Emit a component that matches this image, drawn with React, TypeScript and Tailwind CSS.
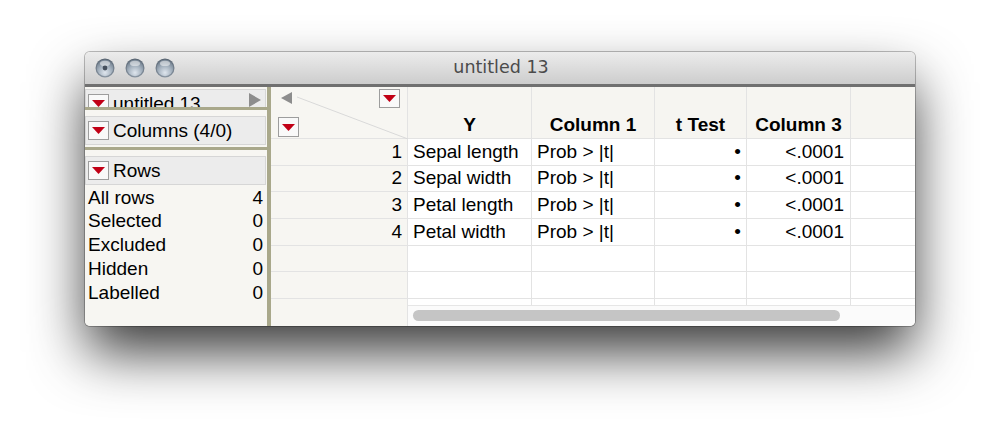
import React from "react";

const sans = "font-['Liberation_Sans',Arial,sans-serif]";

const DropButton = ({ className = "" }: { className?: string }) => (
  <div
    className={`w-[21px] h-[19px] border border-[#9d9d9d] bg-[#f9f9f9] flex items-center justify-center shrink-0 ${className}`}
  >
    <svg width="13" height="7" viewBox="0 0 13 7">
      <polygon points="0,0 13,0 6.5,7" fill="#c10016" />
    </svg>
  </div>
);

const Light = ({ dot }: { dot?: boolean }) => (
  <svg width="20" height="20" viewBox="0 0 20 20">
    <defs>
      <linearGradient id="ring" x1="0" y1="0" x2="0" y2="1">
        <stop offset="0" stopColor="#5a6673" />
        <stop offset="1" stopColor="#8894a1" />
      </linearGradient>
      <radialGradient id="fill" cx="0.5" cy="0.78" r="0.7">
        <stop offset="0" stopColor="#dfe6ee" />
        <stop offset="0.6" stopColor="#a3b0bd" />
        <stop offset="1" stopColor="#778594" />
      </radialGradient>
    </defs>
    <circle cx="10" cy="10" r="9.5" fill="url(#ring)" />
    <circle cx="10" cy="10" r="8.3" fill="url(#fill)" />
    <ellipse cx="10" cy="5.4" rx="5" ry="2.7" fill="#ffffff" opacity="0.5" />
    {dot && <circle cx="10" cy="10" r="2.4" fill="#46505d" />}
  </svg>
);

const HeaderBox = ({ label, arrow }: { label: string; arrow?: boolean }) => (
  <div className="h-[29px] shrink-0 bg-[#ececec] border border-[#d6d6d6] flex items-center pl-[2px] pr-[4px]">
    <DropButton />
    <span className="ml-[4px] text-[19px] leading-[22px] text-black">{label}</span>
    {arrow && (
      <svg className="ml-auto mb-[7px]" width="12" height="14" viewBox="0 0 12 14">
        <polygon points="0,0 12,7 0,14" fill="#8d8d8d" />
      </svg>
    )}
  </div>
);

const rowStats = [
  ["All rows", "4"],
  ["Selected", "0"],
  ["Excluded", "0"],
  ["Hidden", "0"],
  ["Labelled", "0"],
];

const columns = [
  { label: "Y", w: "w-[124px]" },
  { label: "Column 1", w: "w-[123px]" },
  { label: "t Test", w: "w-[92px]" },
  { label: "Column 3", w: "w-[104px]" },
];

const data = [
  ["Sepal length", "Prob > |t|", "•", "<.0001"],
  ["Sepal width", "Prob > |t|", "•", "<.0001"],
  ["Petal length", "Prob > |t|", "•", "<.0001"],
  ["Petal width", "Prob > |t|", "•", "<.0001"],
  ["", "", "", ""],
  ["", "", "", ""],
  ["", "", "", ""],
];

const App = () => {
  return (
    <div className={`w-[999px] h-[444px] bg-white pl-[85px] pt-[52px] ${sans}`}>
      <div className="w-[830px] h-[274px] rounded-[5px] overflow-hidden flex flex-col bg-[#f7f6f2] shadow-[0_28px_55px_-2px_rgba(0,0,0,0.78),0_0_0_1px_rgba(0,0,0,0.25)]">
        {/* title bar */}
        <div className="h-[35px] shrink-0 bg-gradient-to-b from-[#ececec] to-[#cdcdcd] border-b-[3px] border-[#707070] flex items-center relative">
          <div className="flex items-center gap-[10px] pl-[10px]">
            <Light dot />
            <Light />
            <Light />
          </div>
          <div className="absolute inset-0 flex items-center justify-center pb-[1px] pl-[2px] font-['DejaVu_Sans',sans-serif] text-[17.5px] text-[#4b4b4b]">
            untitled 13
          </div>
        </div>

        {/* body */}
        <div className="flex-1 flex min-h-0">
          {/* left panel */}
          <div className="w-[182px] shrink-0 flex flex-col bg-[#f7f6f2]">
            <div className="pt-[2px] pr-[1px]">
              <div className="h-[18px] overflow-hidden">
                <HeaderBox label="untitled 13" arrow />
              </div>
            </div>
            <div className="h-[3px] bg-[#a9a88b]" />
            <div className="pt-[6px] pb-[2px] pr-[1px]">
              <HeaderBox label="Columns (4/0)" />
            </div>
            <div className="h-[3px] bg-[#a9a88b]" />
            <div className="pt-[6px] pr-[1px]">
              <HeaderBox label="Rows" />
            </div>
            <div className="pt-[1px] pl-[3px] pr-[4px]">
              {rowStats.map(([k, v]) => (
                <div key={k} className="h-[23.8px] flex items-center justify-between text-[19px] text-black">
                  <span>{k}</span>
                  <span>{v}</span>
                </div>
              ))}
            </div>
          </div>

          <div className="w-[4px] shrink-0 bg-[#a9a88b]" />

          {/* data grid */}
          <div className="flex-1 flex min-w-0 text-[19px] text-black">
            {/* row number column */}
            <div className="w-[137px] shrink-0 flex flex-col bg-[#f7f6f2] border-r border-[#e3e3e3]">
              <div className="h-[52px] shrink-0 relative flex flex-col justify-between border-b border-[#e3e3e3]">
                <svg className="absolute inset-0" width="137" height="52" viewBox="0 0 137 52">
                  <line x1="26" y1="10" x2="137" y2="52" stroke="#d9d9d9" strokeWidth="1" />
                </svg>
                <div className="flex items-start justify-between pl-[10px] pr-[7px] pt-[2px] relative">
                  <svg className="mt-[3px]" width="11" height="12" viewBox="0 0 11 12">
                    <polygon points="11,0 0,6 11,12" fill="#8d8d8d" />
                  </svg>
                  <DropButton className="h-[18px]" />
                </div>
                <div className="pl-[7px] pb-[1px] relative">
                  <DropButton className="h-[20px]" />
                </div>
              </div>
              <div className="h-[166px] overflow-hidden shrink-0">
                {data.map((_, i) => (
                  <div
                    key={i}
                    className="h-[26.7px] border-b border-[#e3e3e3] flex items-center justify-end pr-[5px]"
                  >
                    {i < 4 ? i + 1 : ""}
                  </div>
                ))}
              </div>
            </div>

            {/* data columns */}
            <div className="flex-1 flex flex-col min-w-0">
              <div className="h-[52px] shrink-0 flex bg-[#f6f5f1] border-b border-[#e3e3e3]">
                {columns.map((c) => (
                  <div
                    key={c.label}
                    className={`${c.w} shrink-0 border-r border-[#e3e3e3] flex items-end justify-center pb-[2px] font-bold leading-[22px]`}
                  >
                    {c.label}
                  </div>
                ))}
                <div className="flex-1" />
              </div>
              <div className="h-[166px] overflow-hidden shrink-0 bg-white">
                {data.map((r, i) => (
                  <div key={i} className="h-[26.7px] flex border-b border-[#e3e3e3]">
                    <div className={`${columns[0].w} shrink-0 border-r border-[#e3e3e3] flex items-center pl-[5px]`}>
                      {r[0]}
                    </div>
                    <div className={`${columns[1].w} shrink-0 border-r border-[#e3e3e3] flex items-center pl-[5px]`}>
                      {r[1]}
                    </div>
                    <div className={`${columns[2].w} shrink-0 border-r border-[#e3e3e3] flex items-center justify-end pr-[5px]`}>
                      {r[2]}
                    </div>
                    <div className={`${columns[3].w} shrink-0 border-r border-[#e3e3e3] flex items-center justify-end pr-[6px]`}>
                      {r[3]}
                    </div>
                    <div className="flex-1" />
                  </div>
                ))}
              </div>
              <div className="flex-1 bg-[#fbfbfb] border-t border-[#e6e6e6] pl-[5px] pt-[4px]">
                <div className="w-[427px] h-[11px] rounded-full bg-[#c5c5c5]" />
              </div>
            </div>
          </div>
        </div>
      </div>
    </div>
  );
};

export default App;
